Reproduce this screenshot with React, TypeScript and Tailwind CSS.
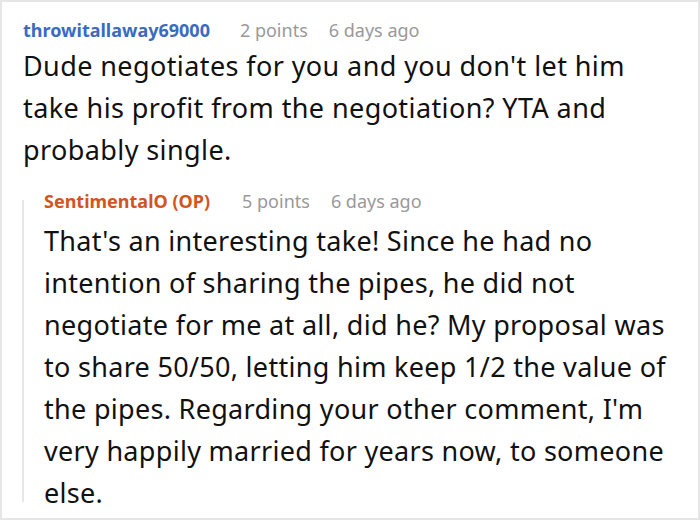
import React from 'react';

export default function App() {
  return (
    <div className="w-[700px] h-[520px] bg-white border-2 border-[#e6e6e6] overflow-hidden font-['Noto_Sans',sans-serif]">
      {/* Top comment */}
      <div className="pl-[21px] pr-[24px] pt-[15px]">
        <div className="flex items-baseline text-[18px] leading-[26px]">
          <span className="font-bold text-[#3a6bc0]">throwitallaway69000</span>
          <span className="ml-[30px] text-[#999999]">2 points</span>
          <span className="ml-[21px] text-[#999999]">6 days ago</span>
        </div>
        <p className="mt-[2px] text-[27px] leading-[42px] tracking-[0.4px] text-[#111111]">
          Dude negotiates for you and you don't let him take his profit from the negotiation? YTA and probably single.
        </p>
      </div>

      {/* Reply */}
      <div className="ml-[20px] mt-[17px] flex">
        <div className="mt-[12px] h-[302px] w-[2px] shrink-0 bg-[#e6e6e6]" />
        <div className="pl-[20px]">
          <div className="flex items-baseline text-[18px] leading-[26px]">
            <span className="font-bold text-[#d4541d]">SentimentalO (OP)</span>
            <span className="ml-[32px] text-[#999999]">5 points</span>
            <span className="ml-[21px] text-[#999999]">6 days ago</span>
          </div>
          <p className="mt-[6px] text-[27px] leading-[42px] tracking-[0.3px] text-[#111111]">
            That's an interesting take! Since he had no intention of sharing the pipes, he did not negotiate for me at all, did he? My proposal was to share 50/50, letting him keep 1/2 the value of the pipes. Regarding your other comment, I'm very happily married for years now, to someone else.
          </p>
        </div>
      </div>
    </div>
  );
}
